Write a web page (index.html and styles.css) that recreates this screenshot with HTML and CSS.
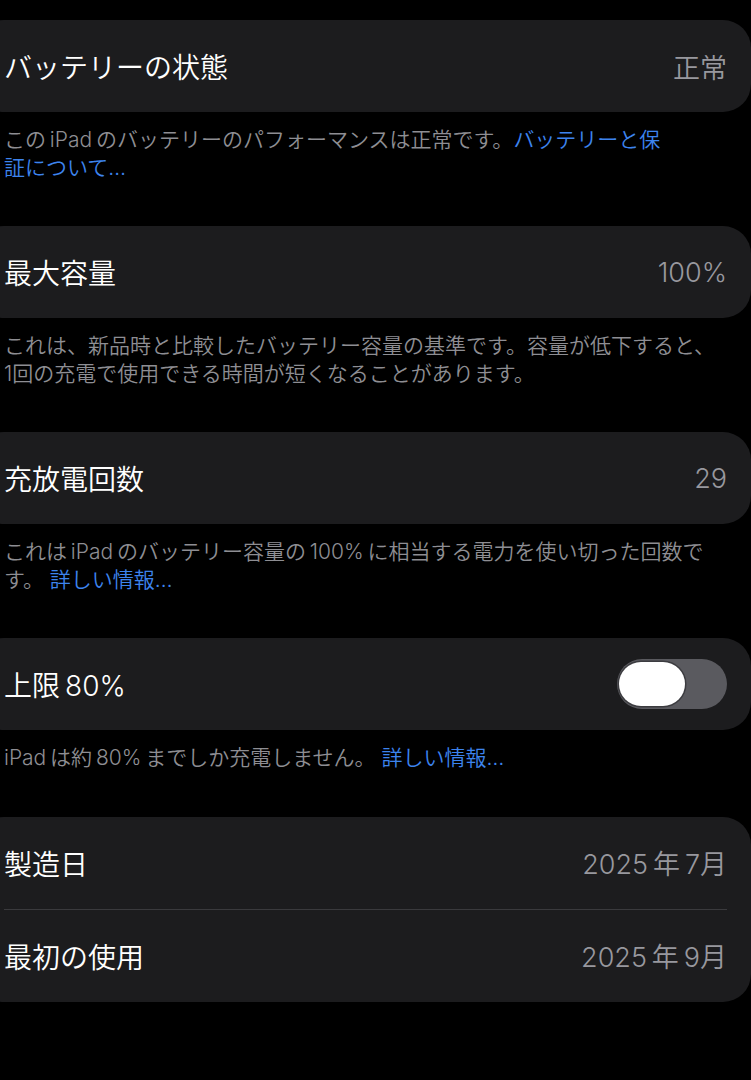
FILE: index.html
```html
<!DOCTYPE html>
<html lang="ja">
<head>
    <meta charset="UTF-8">
    <meta name="viewport" content="width=device-width, initial-scale=1.0">
    <title>バッテリーの状態</title>
    <link rel="stylesheet" href="styles.css">
</head>
<body>
    <main class="settings">
        <section class="group">
            <div class="card">
                <div class="row">
                    <span class="row-title">バッテリーの状態</span>
                    <span class="row-value">正常</span>
                </div>
            </div>
            <p class="footer">この&thinsp;iPad&thinsp;のバッテリーのパフォーマンスは正常です。<a href="#" class="link">バッテリーと保<br>証について…</a></p>
        </section>

        <section class="group">
            <div class="card">
                <div class="row">
                    <span class="row-title">最大容量</span>
                    <span class="row-value">100%</span>
                </div>
            </div>
            <p class="footer">これは、新品時と比較したバッテリー容量の基準です。容量が低下すると、<br>1回の充電で使用できる時間が短くなることがあります。</p>
        </section>

        <section class="group">
            <div class="card">
                <div class="row">
                    <span class="row-title">充放電回数</span>
                    <span class="row-value">29</span>
                </div>
            </div>
            <p class="footer">これは&thinsp;iPad&thinsp;のバッテリー容量の&thinsp;100%&thinsp;に相当する電力を使い切った回数で<br>す。 <a href="#" class="link">詳しい情報…</a></p>
        </section>

        <section class="group">
            <div class="card">
                <div class="row">
                    <span class="row-title">上限&thinsp;80%</span>
                    <button class="switch" aria-label="上限80%"><span class="knob"></span></button>
                </div>
            </div>
            <p class="footer">iPad&thinsp;は約&thinsp;80%&thinsp;までしか充電しません。 <a href="#" class="link">詳しい情報…</a></p>
        </section>

        <section class="group">
            <div class="card">
                <div class="row">
                    <span class="row-title">製造日</span>
                    <span class="row-value">2025&thinsp;年&thinsp;7月</span>
                </div>
                <div class="divider"></div>
                <div class="row">
                    <span class="row-title">最初の使用</span>
                    <span class="row-value">2025&thinsp;年&thinsp;9月</span>
                </div>
            </div>
        </section>
    </main>
</body>
</html>
```

FILE: styles.css
```css
body {
    margin: 0;
    padding: 0;
    background-color: #000;
    font-family: 'Inter', 'Noto Sans CJK JP', sans-serif;
    overflow: hidden;
}

.settings {
    padding-top: 20px;
}

.group {
    margin-bottom: 45px;
}

.card {
    margin-left: -24px;
    background: #1c1c1e;
    border-radius: 28px;
}

.row {
    display: flex;
    align-items: center;
    justify-content: space-between;
    height: 92px;
    padding: 0 24px 0 28px;
}

.row-title {
    font-size: 28px;
    font-weight: 350;
    color: #fff;
}

.row-value {
    font-size: 27px;
    font-weight: 350;
    color: #98989e;
}

.divider {
    height: 1px;
    margin: 0 24px 0 28px;
    background: #3a3a3d;
}

.footer {
    margin: 0;
    padding: 14px 24px 0 4px;
    font-size: 21px;
    font-weight: 350;
    line-height: 27.5px;
    color: #8e8e93;
}

.link {
    color: #3d84ee;
    text-decoration: none;
}

.switch {
    position: relative;
    width: 110px;
    height: 50px;
    padding: 0;
    border: none;
    border-radius: 25px;
    background: #5a5a5f;
    cursor: pointer;
}

.knob {
    position: absolute;
    top: 3px;
    left: 2px;
    width: 66px;
    height: 44px;
    border-radius: 22px;
    background: #fff;
    box-shadow: 0 0 0 1.5px #3c3c40;
}
```
